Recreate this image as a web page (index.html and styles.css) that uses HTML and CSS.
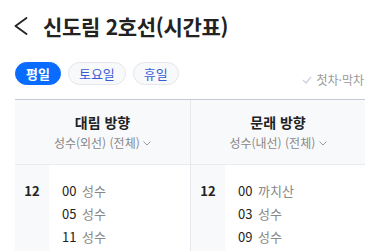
FILE: index.html
```html
<!DOCTYPE html>
<html lang="ko">
<head>
  <meta charset="UTF-8">
  <meta name="viewport" content="width=device-width, initial-scale=1.0">
  <title>신도림 2호선(시간표)</title>
  <link rel="stylesheet" href="styles.css">
</head>
<body>
  <div class="appbar">
    <svg class="back" width="14" height="18" viewBox="0 0 14 18">
      <path d="M12.5 1 L1.5 9 L12.5 17" fill="none" stroke="#222" stroke-width="1.8" stroke-linecap="round" stroke-linejoin="round"/>
    </svg>
    <h1 class="title">신도림 2호선(시간표)</h1>
  </div>

  <div class="filter">
    <div class="tabs">
      <button class="tab tab-on">평일</button>
      <button class="tab">토요일</button>
      <button class="tab">휴일</button>
    </div>
    <span class="firstlast">
      <svg width="10" height="8" viewBox="0 0 10 8">
        <path d="M1 4 L4 7 L9 1" fill="none" stroke="#cfd3d8" stroke-width="1.4"/>
      </svg>
      첫차·막차
    </span>
  </div>

  <div class="timetable">
    <div class="dir">
      <div class="dir-head">
        <p class="dir-name">대림 방향</p>
        <p class="dir-sub">성수(외선) (전체)
          <svg class="caret" width="8" height="5" viewBox="0 0 8 5"><path d="M0.5 0.5 L4 4 L7.5 0.5" fill="none" stroke="#999" stroke-width="1"/></svg>
        </p>
      </div>
      <div class="hour-row">
        <div class="hour">12</div>
        <div class="mins">
          <p><b>00</b> 성수</p>
          <p><b>05</b> 성수</p>
          <p><b>11</b> 성수</p>
        </div>
      </div>
    </div>
    <div class="dir">
      <div class="dir-head">
        <p class="dir-name">문래 방향</p>
        <p class="dir-sub">성수(내선) (전체)
          <svg class="caret" width="8" height="5" viewBox="0 0 8 5"><path d="M0.5 0.5 L4 4 L7.5 0.5" fill="none" stroke="#999" stroke-width="1"/></svg>
        </p>
      </div>
      <div class="hour-row">
        <div class="hour">12</div>
        <div class="mins">
          <p><b>00</b> 까치산</p>
          <p><b>03</b> 성수</p>
          <p><b>09</b> 성수</p>
        </div>
      </div>
    </div>
  </div>
</body>
</html>
```
FILE: styles.css
```css
body {
  margin: 0;
  padding: 0;
  height: 251px;
  background: #fff;
  color: #222;
  font-family: "Noto Sans CJK KR", "Noto Sans", sans-serif;
  overflow: hidden;
}
p {
  margin: 0;
}

.appbar {
  height: 52px;
  display: flex;
  align-items: center;
  padding: 0 0 0 14px;
}
.back {
  display: block;
  margin-right: 15px;
}
.title {
  margin: 0;
  font-size: 21px;
  font-weight: bold;
  letter-spacing: -0.3px;
  color: #222;
}

.filter {
  margin: 10px 15px 0;
  display: flex;
  justify-content: space-between;
  align-items: flex-end;
  height: 23px;
}
.tabs {
  display: flex;
  gap: 7px;
}
.tab {
  height: 23px;
  padding: 0 10px;
  border: 1px solid #e3e6eb;
  border-radius: 12px;
  background: #f8f9fb;
  color: #3b5bd6;
  font-family: inherit;
  font-size: 13px;
  line-height: 21px;
}
.tab-on {
  background: #0a6cff;
  border-color: #0a6cff;
  color: #fff;
  font-weight: bold;
}
.firstlast {
  display: flex;
  align-items: center;
  gap: 4px;
  font-size: 12px;
  color: #999;
  margin-bottom: -3px;
  margin-right: 1px;
}

.timetable {
  margin: 14px 15px 0;
  border-top: 1px solid #c5cad2;
  display: grid;
  grid-template-columns: 1fr 1fr;
}
.dir + .dir {
  border-left: 1px solid #e4e7eb;
}
.dir-head {
  height: 64px;
  background: #f8f9fb;
  border-bottom: 1px solid #e8ebef;
  display: flex;
  flex-direction: column;
  align-items: center;
  justify-content: center;
}
.dir-name {
  font-size: 14px;
  font-weight: bold;
  line-height: 21px;
  color: #222;
}
.dir-sub {
  font-size: 12px;
  line-height: 19px;
  color: #888;
}
.caret {
  vertical-align: 2px;
}

.hour-row {
  display: flex;
}
.hour {
  width: 34px;
  height: 72px;
  background: #f8f9fb;
  text-align: center;
  font-size: 13px;
  font-weight: bold;
  padding-top: 14px;
  line-height: 23px;
}
.mins {
  padding: 14px 0 0 13px;
  font-size: 13px;
  line-height: 23px;
  color: #888;
}
.mins b {
  font-weight: normal;
  color: #222;
  margin-right: 2px;
}
```
